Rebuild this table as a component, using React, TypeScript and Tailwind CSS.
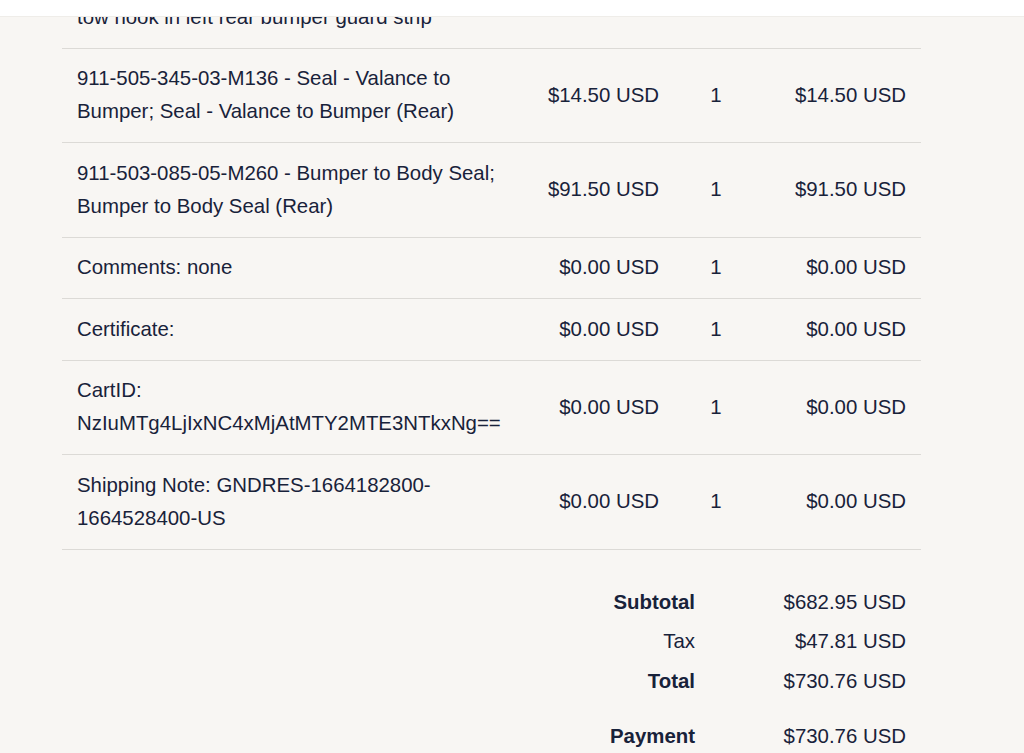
type Line = {
  description: string[];
  price: string;
  qty: string;
  total: string;
};

const lines: Line[] = [
  { description: ["tow hook in left rear bumper guard strip"], price: "", qty: "", total: "" },
  {
    description: ["911-505-345-03-M136 - Seal - Valance to Bumper; Seal - Valance to Bumper (Rear)"],
    price: "$14.50 USD",
    qty: "1",
    total: "$14.50 USD",
  },
  {
    description: ["911-503-085-05-M260 - Bumper to Body Seal; Bumper to Body Seal (Rear)"],
    price: "$91.50 USD",
    qty: "1",
    total: "$91.50 USD",
  },
  { description: ["Comments: none"], price: "$0.00 USD", qty: "1", total: "$0.00 USD" },
  { description: ["Certificate:"], price: "$0.00 USD", qty: "1", total: "$0.00 USD" },
  {
    description: ["CartID: NzIuMTg4LjIxNC4xMjAtMTY2MTE3NTkxNg=="],
    price: "$0.00 USD",
    qty: "1",
    total: "$0.00 USD",
  },
  {
    description: ["Shipping Note: GNDRES-1664182800-1664528400-US"],
    price: "$0.00 USD",
    qty: "1",
    total: "$0.00 USD",
  },
];

const totals = [
  { label: "Subtotal", value: "$682.95 USD", bold: true },
  { label: "Tax", value: "$47.81 USD", bold: false },
  { label: "Total", value: "$730.76 USD", bold: true },
];

export default function App() {
  return (
    <div
      className="w-[1024px] h-[753px] overflow-hidden bg-[#f8f6f3] text-[#18223a] flex flex-col"
      style={{ fontFamily: '"Liberation Sans", Arial, sans-serif' }}
    >
      <div className="h-[17px] shrink-0 bg-white border-b border-[#efede9]" />

      <div className="flex-1 overflow-hidden">
        <div className="ml-[62px] w-[859px] -mt-[30px] text-[20.4px] leading-[33px]">
          {lines.map((line, i) => (
            <div
              key={i}
              className="grid grid-cols-[462px_150px_84px_163px] items-center border-b border-[#dcdad6] pt-[13.5px] pb-[14px]"
            >
              <div className="pl-[15px] pr-[15px]">
                {line.description.map((d, j) => (
                  <div key={j} className="[word-break:break-word]">
                    {d}
                  </div>
                ))}
              </div>
              <div className="text-right pr-[15px]">{line.price}</div>
              <div className="text-center">{line.qty}</div>
              <div className="text-right pr-[15px]">{line.total}</div>
            </div>
          ))}

          <div className="pt-[33px]">
            {totals.map((t) => (
              <div key={t.label} className="flex h-[39.5px] items-center">
                <div className={`w-[648px] text-right pr-[15px] ${t.bold ? "font-bold" : ""}`}>{t.label}</div>
                <div className="w-[211px] text-right pr-[15px]">{t.value}</div>
              </div>
            ))}
            <div className="flex h-[39.5px] items-center mt-[15.5px]">
              <div className="w-[648px] text-right pr-[15px] font-bold">Payment</div>
              <div className="w-[211px] text-right pr-[15px]">$730.76 USD</div>
            </div>
          </div>
        </div>
      </div>
    </div>
  );
}
